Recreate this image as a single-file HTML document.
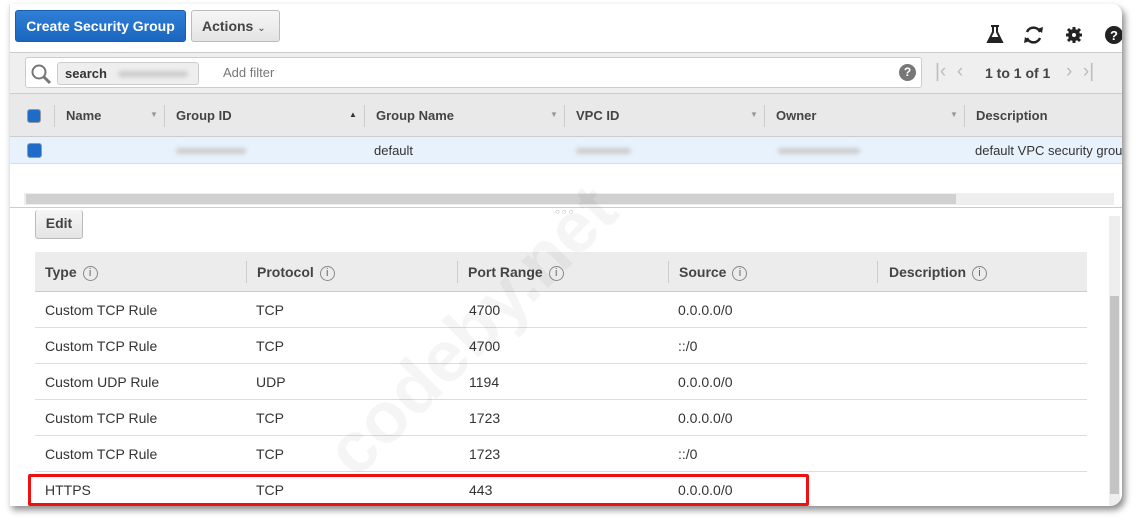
<!DOCTYPE html>
<html><head><style>
*{box-sizing:border-box;margin:0;padding:0}
body{width:1145px;height:529px;background:#fff;font-family:"Liberation Sans",sans-serif;font-size:13px;color:#333;position:relative;overflow:hidden}
.card{position:absolute;left:9px;top:4px;width:1113px;height:502px;background:#fff;border-radius:0 10px 12px 0;box-shadow:3px 4px 7px rgba(0,0,0,.45);overflow:hidden;border-left:1px solid #e4e4e4}
.abs{position:absolute}
.btn{position:absolute;border-radius:3px;font-weight:bold;font-size:14px;line-height:30px}
.th{position:absolute;font-weight:bold;color:#444;top:0;line-height:44px}
.sep{position:absolute;width:1px;background:#ccc}
.cell{position:absolute;line-height:36px;font-size:14px;color:#333}
.row{position:absolute;left:25px;width:1052px;height:36px;border-bottom:1px solid #ddd}
.i{display:inline-block;width:15px;height:15px;border:1px solid #888;border-radius:50%;font-size:11px;line-height:13px;text-align:center;color:#666;font-weight:normal;margin-left:6px;vertical-align:1px}
.blur{position:absolute;height:6px;border-radius:3px;background:#ccc;filter:blur(2px)}
</style></head><body>
<div class="card">
 <div class="btn" style="left:5px;top:6px;width:171px;height:32px;background:linear-gradient(#2f7fd6,#1b66bf);color:#fff;text-align:center;border:1px solid #1a5fae">Create Security Group</div>
 <div class="btn" style="left:181px;top:6px;width:89px;height:32px;background:linear-gradient(#f6f6f6,#e4e4e4);border:1px solid #bbb;color:#444;padding-left:10px">Actions <span style="font-size:10px;font-weight:normal">&#8964;</span></div>
 <svg class="abs" style="left:975px;top:20px" width="140" height="22">
  <path d="M6 2h8M8 2v6l-5 10h14l-5-10V2" fill="none" stroke="#222" stroke-width="2"/><path d="M5 13h10l2 5H3z" fill="#222"/>
  <path d="M42 8a7 7 0 0 1 13 0M55 14a7 7 0 0 1-13 0" fill="none" stroke="#222" stroke-width="2.5"/><path d="M52 5l5 4 1-6zM45 17l-5-4-1 6z" fill="#222"/>
  <circle cx="89" cy="11" r="6" fill="#222"/><path d="M89 3v16M81 11h16M83 5l12 12M95 5L83 17" stroke="#222" stroke-width="3"/><circle cx="89" cy="11" r="2" fill="#fff"/>
  <circle cx="129" cy="11" r="9" fill="#222"/><text x="129" y="16" font-size="13" font-weight="bold" fill="#fff" text-anchor="middle" font-family="Liberation Sans">?</text>
 </svg>
 <div class="abs" style="left:0;top:48px;width:1113px;height:41px;background:#efefef;border-top:1px solid #ccc"></div>
 <div class="abs" style="left:15px;top:53px;width:897px;height:31px;background:#fff;border:1px solid #ccc;border-radius:3px"></div>
 <svg class="abs" style="left:20px;top:59px" width="22" height="22"><circle cx="9" cy="9" r="6.5" fill="none" stroke="#777" stroke-width="2"/><path d="M14 14l6 6" stroke="#777" stroke-width="3"/></svg>
 <div class="abs" style="left:47px;top:58px;width:142px;height:23px;background:#eee;border:1px solid #ccc;border-radius:3px;font-weight:bold;padding-left:7px;line-height:21px">search</div>
 <div class="blur" style="left:108px;top:67px;width:70px"></div>
 <div class="abs" style="left:213px;top:61px;color:#777;font-size:13px">Add filter</div>
 <div class="abs" style="left:889px;top:60px;width:17px;height:17px;border-radius:50%;background:#777;color:#fff;font-weight:bold;font-size:12px;text-align:center;line-height:17px">?</div>
 <div class="abs" style="left:925px;top:57px;color:#bbb;font-size:19px">|&lsaquo;&nbsp;&nbsp;&lsaquo;</div>
 <div class="abs" style="left:975px;top:61px;font-weight:bold;color:#444;font-size:14px">1 to 1 of 1</div>
 <div class="abs" style="left:1056px;top:57px;color:#bbb;font-size:19px">&rsaquo;&nbsp;&nbsp;&rsaquo;|</div>
 <div class="abs" style="left:0;top:89px;width:1113px;height:44px;background:#e9e9e9;border-top:1px solid #ccc;border-bottom:1px solid #ccc">
  <div class="abs" style="left:17px;top:15px;width:14px;height:14px;background:#1e6cc8;border:1px solid #999;border-radius:3px"></div>
  <div class="sep" style="left:44px;top:11px;height:22px"></div>
  <div class="th" style="left:56px">Name</div><div class="abs" style="left:140px;top:16px;font-size:8px;color:#999">&#9660;</div>
  <div class="sep" style="left:154px;top:11px;height:22px"></div>
  <div class="th" style="left:166px">Group ID</div><div class="abs" style="left:339px;top:16px;font-size:8px;color:#333">&#9650;</div>
  <div class="sep" style="left:354px;top:11px;height:22px"></div>
  <div class="th" style="left:366px">Group Name</div><div class="abs" style="left:540px;top:16px;font-size:8px;color:#999">&#9660;</div>
  <div class="sep" style="left:554px;top:11px;height:22px"></div>
  <div class="th" style="left:566px">VPC ID</div><div class="abs" style="left:740px;top:16px;font-size:8px;color:#999">&#9660;</div>
  <div class="sep" style="left:754px;top:11px;height:22px"></div>
  <div class="th" style="left:766px">Owner</div><div class="abs" style="left:940px;top:16px;font-size:8px;color:#999">&#9660;</div>
  <div class="sep" style="left:954px;top:11px;height:22px"></div>
  <div class="th" style="left:966px">Description</div>
 </div>
 <div class="abs" style="left:0;top:133px;width:1113px;height:27px;background:#e8f2fc;border-bottom:1px solid #d6dde6">
  <div class="abs" style="left:17px;top:6px;width:15px;height:15px;background:#1e6cc8;border:1px solid #999;border-radius:3px"></div>
  <div class="blur" style="left:166px;top:11px;width:70px"></div>
  <div class="abs" style="left:364px;top:6px;font-size:13px">default</div>
  <div class="blur" style="left:566px;top:11px;width:55px"></div>
  <div class="blur" style="left:768px;top:11px;width:82px"></div>
  <div class="abs" style="left:965px;top:6px;font-size:13px;white-space:nowrap">default VPC security group</div>
 </div>
 <div class="abs" style="left:14px;top:189px;width:1090px;height:12px;background:#eee"></div>
 <div class="abs" style="left:16px;top:190px;width:930px;height:10px;background:#d0d0d0"></div>
 <div class="abs" style="left:0;top:203px;width:1113px;height:1px;background:#ccc"></div>
 <div class="abs" style="left:545px;top:203px;font-size:8px;color:#aaa;letter-spacing:2px">&#9675;&#9675;&#9675;</div>
 <div class="abs" style="left:1099px;top:212px;width:11px;height:290px;background:#eee"></div>
 <div class="abs" style="left:1100px;top:292px;width:9px;height:198px;background:#c4c4c4"></div>
 <div class="btn" style="left:25px;top:206px;width:48px;height:29px;background:linear-gradient(#f6f6f6,#e4e4e4);border:1px solid #bbb;border-top:none;color:#444;text-align:center;font-size:14px;line-height:26px">Edit</div>
 <div class="abs" style="left:25px;top:248px;width:1052px;height:40px;background:#ececec;border-bottom:1px solid #ccc">
  <div class="th" style="left:10px;line-height:40px;font-size:14px">Type<span class="i">i</span></div>
  <div class="sep" style="left:211px;top:9px;height:22px"></div>
  <div class="th" style="left:222px;line-height:40px;font-size:14px">Protocol<span class="i">i</span></div>
  <div class="sep" style="left:422px;top:9px;height:22px"></div>
  <div class="th" style="left:433px;line-height:40px;font-size:14px">Port Range<span class="i">i</span></div>
  <div class="sep" style="left:633px;top:9px;height:22px"></div>
  <div class="th" style="left:644px;line-height:40px;font-size:14px">Source<span class="i">i</span></div>
  <div class="sep" style="left:842px;top:9px;height:22px"></div>
  <div class="th" style="left:854px;line-height:40px;font-size:14px">Description<span class="i">i</span></div>
 </div>
 <div class="row" style="top:288px"><div class="cell" style="left:10px">Custom TCP Rule</div><div class="cell" style="left:221px">TCP</div><div class="cell" style="left:434px">4700</div><div class="cell" style="left:643px">0.0.0.0/0</div></div>
 <div class="row" style="top:324px"><div class="cell" style="left:10px">Custom TCP Rule</div><div class="cell" style="left:221px">TCP</div><div class="cell" style="left:434px">4700</div><div class="cell" style="left:643px">::/0</div></div>
 <div class="row" style="top:360px"><div class="cell" style="left:10px">Custom UDP Rule</div><div class="cell" style="left:221px">UDP</div><div class="cell" style="left:434px">1194</div><div class="cell" style="left:643px">0.0.0.0/0</div></div>
 <div class="row" style="top:396px"><div class="cell" style="left:10px">Custom TCP Rule</div><div class="cell" style="left:221px">TCP</div><div class="cell" style="left:434px">1723</div><div class="cell" style="left:643px">0.0.0.0/0</div></div>
 <div class="row" style="top:432px"><div class="cell" style="left:10px">Custom TCP Rule</div><div class="cell" style="left:221px">TCP</div><div class="cell" style="left:434px">1723</div><div class="cell" style="left:643px">::/0</div></div>
 <div class="row" style="top:468px;border:none"><div class="cell" style="left:10px">HTTPS</div><div class="cell" style="left:221px">TCP</div><div class="cell" style="left:434px">443</div><div class="cell" style="left:643px">0.0.0.0/0</div></div>
 <div class="abs" style="left:18px;top:470px;width:781px;height:32px;border:3px solid #f01010;border-radius:2px"></div>
 <div class="abs" style="left:300px;top:430px;font-size:72px;font-weight:bold;color:rgba(0,0,0,.04);transform:rotate(-45deg);transform-origin:left top;white-space:nowrap">codeby.net</div>
</div>
</body></html>
